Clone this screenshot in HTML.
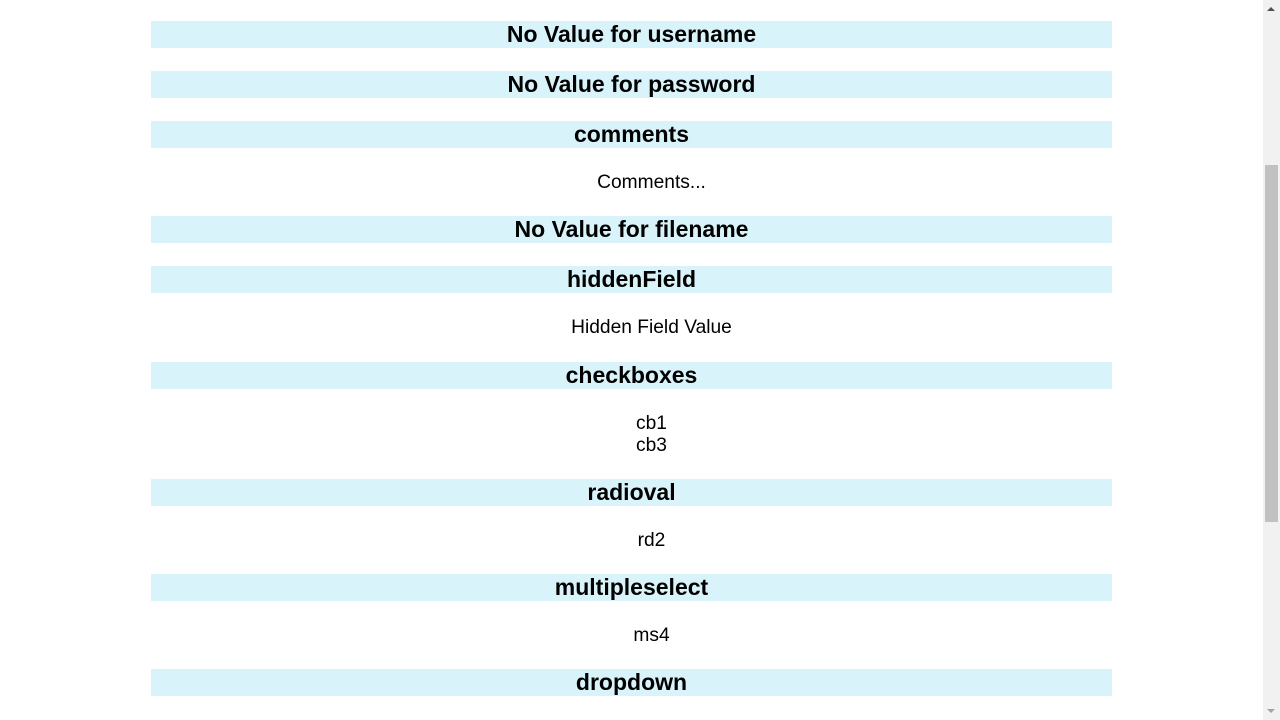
<!DOCTYPE html>
<html><head><style>
body{margin:0;width:1280px;height:720px;overflow:hidden;background:#fff;font-family:"Liberation Sans",Arial,sans-serif;color:#000;position:relative}
.h{position:absolute;left:151px;width:961px;height:27px;background:#d8f3f9;text-align:center;font-weight:bold;font-size:23px;line-height:26px}
.t{position:absolute;left:191px;width:921px;text-align:center;font-size:19.2px;line-height:22px}
.sb{position:absolute;left:1263px;top:0;width:17px;height:720px;background:#f1f1f1}
.th{position:absolute;left:1265px;top:165px;width:13px;height:357px;background:#c1c1c1}
.ar{position:absolute;left:1267px;top:7px;width:0;height:0;border-left:4px solid transparent;border-right:4px solid transparent;border-bottom:4px solid #505050}
.ar2{position:absolute;left:1267px;top:709px;width:0;height:0;border-left:4px solid transparent;border-right:4px solid transparent;border-top:4px solid #a3a3a3}
</style></head><body>
<div class="h" style="top:21px">No Value for username</div>
<div class="h" style="top:71px">No Value for password</div>
<div class="h" style="top:121px">comments</div>
<div class="t" style="top:172px">Comments...</div>
<div class="h" style="top:216px">No Value for filename</div>
<div class="h" style="top:266px">hiddenField</div>
<div class="t" style="top:317px">Hidden Field Value</div>
<div class="h" style="top:362px">checkboxes</div>
<div class="t" style="top:413px">cb1<br>cb3</div>
<div class="h" style="top:479px">radioval</div>
<div class="t" style="top:530px">rd2</div>
<div class="h" style="top:574px">multipleselect</div>
<div class="t" style="top:625px">ms4</div>
<div class="h" style="top:669px">dropdown</div>
<div class="sb"></div><div class="th"></div><div class="ar"></div><div class="ar2"></div>
</body></html>
